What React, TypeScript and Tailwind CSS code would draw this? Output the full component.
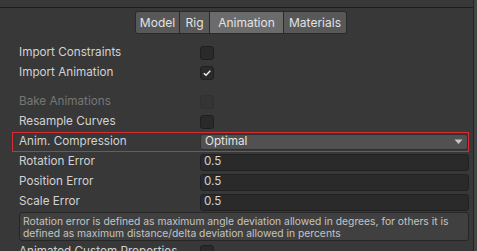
const font = { fontFamily: 'Inter, "Noto Sans", sans-serif' }

function Check({ checked = false, disabled = false }: { checked?: boolean; disabled?: boolean }) {
    return (
        <div
            className={
                disabled
                    ? 'w-[14px] h-[14px] rounded-[3px] border border-[#303030] bg-[#343434]'
                    : 'w-[14px] h-[14px] rounded-[3px] border border-[#1f1f1f] bg-[#2a2a2a] flex items-center justify-center'
            }
        >
            {checked && (
                <svg width="10" height="10" viewBox="0 0 10 10">
                    <path d="M1.8 5.2 L4 7.3 L8.3 2.8" fill="none" stroke="#eeeeee" strokeWidth="1.5" />
                </svg>
            )}
        </div>
    )
}

function Row({ label, children, dim = false }: { label: string; children: React.ReactNode; dim?: boolean }) {
    return (
        <div className="h-[20px] shrink-0 flex items-center pl-[19px] pr-[4px]">
            <span className={`w-[181px] shrink-0 whitespace-nowrap text-[11.7px] ${dim ? 'text-[#767676]' : 'text-[#d2d2d2]'}`}>
                {label}
            </span>
            <div className="flex-1 flex items-center">{children}</div>
        </div>
    )
}

function Field({ value }: { value: string }) {
    return (
        <div className="w-full h-[17px] rounded-[3px] border border-[#212121] bg-[#2a2a2a] flex items-center pl-[3px] text-[11.7px] text-[#d2d2d2]">
            {value}
        </div>
    )
}

export default function App() {
    const tabs = ['Model', 'Rig', 'Animation', 'Materials']
    const widths = ['w-[43px]', 'w-[30px]', 'w-[74px]', 'w-[63px]']
    return (
        <div className="w-[477px] h-[251px] overflow-hidden bg-[#383838] flex" style={font}>
            <div className="w-[473px] shrink-0 flex flex-col">
                <div className="h-[7px] shrink-0" />
                <div className="h-[1px] shrink-0 bg-[#1c1c1c]" />
                {/* tabs */}
                <div className="pt-[3px] pl-[135px] shrink-0 flex">
                    <div className="flex h-[23px] rounded-[3px] border border-[#2a2a2a] overflow-hidden">
                        {tabs.map((t, i) => (
                            <div
                                key={t}
                                className={`flex items-center justify-center text-[12px] text-[#e2e2e2] ${
                                    i > 0 ? 'border-l border-[#2a2a2a]' : ''
                                } ${t === 'Animation' ? 'bg-[#6b6b6b]' : 'bg-[#585858]'} ${widths[i]}`}
                            >
                                {t}
                            </div>
                        ))}
                    </div>
                </div>

                <div className="mt-[9px] flex flex-col">
                    <Row label="Import Constraints">
                        <Check />
                    </Row>
                    <Row label="Import Animation">
                        <Check checked />
                    </Row>
                    <div className="h-[9px] shrink-0" />
                    <Row label="Bake Animations" dim>
                        <Check disabled />
                    </Row>
                    <Row label="Resample Curves">
                        <Check />
                    </Row>

                    {/* highlighted compression row */}
                    <div className="h-[20px] shrink-0 ml-[12px] mr-[4px] border border-[#d62d33] flex items-center pl-[6px]">
                        <span className="w-[181px] shrink-0 text-[11.7px] text-[#d2d2d2]">Anim. Compression</span>
                        <div className="flex-1 h-[16px] rounded-[3px] bg-[#515151] border border-[#303030] flex items-center justify-between pl-[4px] pr-[4px] text-[11.7px] text-[#e4e4e4]">
                            <span>Optimal</span>
                            <svg width="9" height="6" viewBox="0 0 9 6">
                                <path d="M0.5 0.5 H8.5 L4.5 5 Z" fill="#c8c8c8" />
                            </svg>
                        </div>
                    </div>

                    <Row label="Rotation Error">
                        <Field value="0.5" />
                    </Row>
                    <Row label="Position Error">
                        <Field value="0.5" />
                    </Row>
                    <Row label="Scale Error">
                        <Field value="0.5" />
                    </Row>

                    <div className="shrink-0 ml-[19px] mr-[4px] h-[29px] rounded-[3px] border border-[#262626] bg-[#404040] pl-[3px] pt-[2px] whitespace-nowrap text-[10.3px] leading-[12px] text-[#c4c4c4]">
                        Rotation error is defined as maximum angle deviation allowed in degrees, for others it is
                        <br />
                        defined as maximum distance/delta deviation allowed in percents
                    </div>

                    <div className="mt-[1px]">
                        <Row label="Animated Custom Properties">
                            <Check />
                        </Row>
                    </div>
                </div>
            </div>
            <div className="w-[1px] shrink-0 bg-[#232323]" />
            <div className="flex-1 bg-[#454545]" />
        </div>
    )
}
